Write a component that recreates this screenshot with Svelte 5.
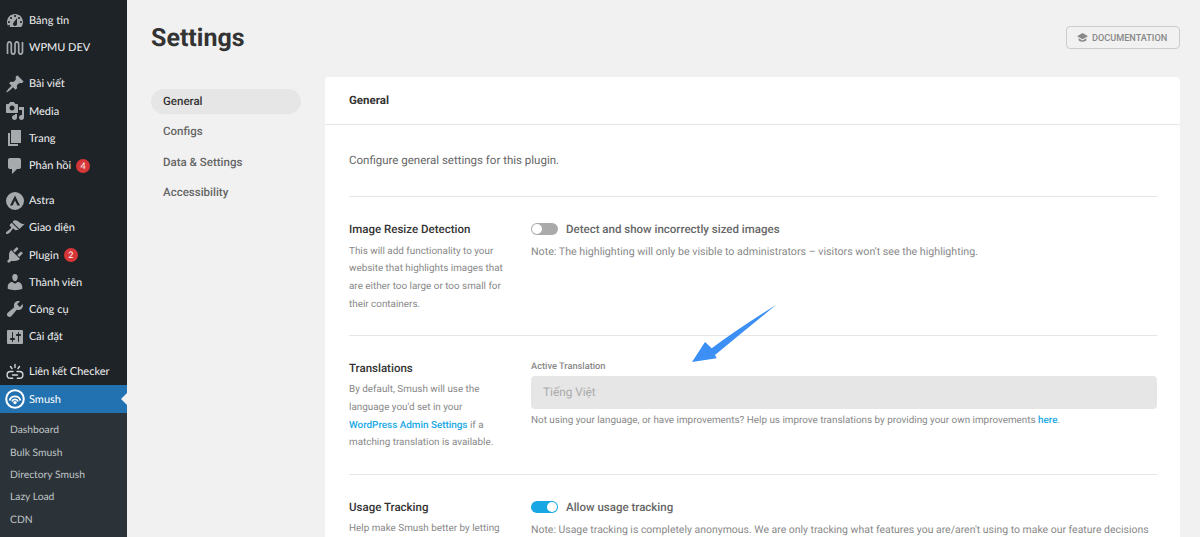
<script>
  const icons = {
    dashboard: "M3.76 16h12.48c1.1-1.37 1.76-3.11 1.76-5 0-4.42-3.58-8-8-8s-8 3.58-8 8c0 1.89.66 3.63 1.76 5zM10 4c.55 0 1 .45 1 1s-.45 1-1 1-1-.45-1-1 .45-1 1-1zM6 6c.55 0 1 .45 1 1s-.45 1-1 1-1-.45-1-1 .45-1 1-1zm8 0c.55 0 1 .45 1 1s-.45 1-1 1-1-.45-1-1 .45-1 1-1zm-5.37 5.55L12 7v6c0 1.1-.9 2-2 2s-2-.9-2-2c0-.57.24-1.08.63-1.45zM4 10c.55 0 1 .45 1 1s-.45 1-1 1-1-.45-1-1 .45-1 1-1zm12 0c.55 0 1 .45 1 1s-.45 1-1 1-1-.45-1-1 .45-1 1-1zm-12 4c.55 0 1 .45 1 1s-.45 1-1 1-1-.45-1-1 .45-1 1-1z",
    pin: "M10.44 3.02l1.82-1.82 6.36 6.35-1.83 1.82c-1.05-.68-2.48-.57-3.41.36l-.75.75c-.92.93-1.04 2.35-.35 3.41l-1.83 1.82-2.41-2.41-2.8 2.79c-.42.42-3.38 2.71-3.8 2.29s1.86-3.39 2.28-3.81l2.79-2.79L4.1 9.36l1.83-1.82c1.05.69 2.48.57 3.4-.36l.75-.75c.93-.92 1.05-2.35.36-3.41z",
    media: "M13 11V4c0-.55-.45-1-1-1h-1.67L9 1H5L3.67 3H2c-.55 0-1 .45-1 1v7c0 .55.45 1 1 1h10c.55 0 1-.45 1-1zM7 4.5c1.38 0 2.5 1.12 2.5 2.5S8.38 9.5 7 9.5 4.5 8.38 4.5 7 5.62 4.5 7 4.5zM14 6h5v10.5c0 1.38-1.12 2.5-2.5 2.5S14 17.88 14 16.5s1.12-2.5 2.5-2.5c.17 0 .34.02.5.05V9h-3V6zm-4 8.05V13h2v3.5c0 1.38-1.12 2.5-2.5 2.5S7 17.88 7 16.5 8.12 14 9.5 14c.17 0 .34.02.5.05z",
    page: "M6 15V2h10v13H6zm-1 1h8v2H3V5h2v11z",
    comments: "M5 2h9c1.1 0 2 .9 2 2v7c0 1.1-.9 2-2 2h-2l-5 5v-5H5c-1.1 0-2-.9-2-2V4c0-1.1.9-2 2-2z",
    appearance: "M14.48 11.06L7.41 3.99l1.5-1.5c.5-.56 2.3-.47 3.51.32 1.21.8 1.43 1.28 2.91 2.1 1.18.64 2.45 1.26 4.45.85zm-.71.71L6.7 4.7 4.93 6.47c-.39.39-.39 1.02 0 1.41l1.06 1.06c.39.39.39 1.03 0 1.42-.6.6-1.43 1.11-2.21 1.69-.35.26-.7.53-1.01.84C1.43 13.23.4 14.98 1.21 15.79c.8.8 2.55-.23 3.91-1.59.31-.31.58-.66.84-1.01.58-.78 1.09-1.61 1.69-2.21.39-.39 1.02-.39 1.41 0l1.06 1.06c.39.39 1.02.39 1.41 0z",
    plugin: "M13.11 4.36L9.87 7.6 8 5.73l3.24-3.24c.35-.34 1.05-.2 1.56.32.52.51.66 1.21.31 1.55zm-8 1.77l.91-1.12 9.01 9.01-1.19.84c-.71.71-2.63 1.16-3.82 1.16H6.14L4.9 17.26c-.59.59-1.54.59-2.12 0-.59-.58-.59-1.53 0-2.12l1.24-1.24v-3.88c0-1.13.4-3.19 1.09-3.89zm7.26 3.97l3.24-3.24c.34-.35 1.04-.21 1.55.31.52.51.66 1.21.31 1.55l-3.24 3.25z",
    users: "M10 9.25c-2.27 0-2.73-3.44-2.73-3.44C7 4.02 7.82 2 9.97 2c2.16 0 2.98 2.02 2.71 3.81 0 0-.41 3.44-2.68 3.44zm0 2.57L12.72 10c2.39 0 4.52 2.33 4.52 4.53v2.49s-3.65 1.13-7.24 1.13c-3.65 0-7.24-1.13-7.24-1.13v-2.49c0-2.25 1.94-4.48 4.47-4.48z",
    tools: "M16.68 9.77c-1.34 1.34-3.3 1.67-4.95.99l-5.41 6.52c-.99.99-2.59.99-3.58 0s-.99-2.59 0-3.57l6.52-5.42c-.68-1.65-.35-3.61.99-4.95 1.28-1.28 3.12-1.62 4.72-1.06l-2.89 2.89 2.82 2.82 2.86-2.87c.53 1.58.18 3.39-1.08 4.65z",
    settings: "M18 16V4c0-.55-.45-1-1-1H3c-.55 0-1 .45-1 1v12c0 .55.45 1 1 1h14c.55 0 1-.45 1-1zM8 11h1c.55 0 1 .45 1 1s-.45 1-1 1H8v1.5c0 .28-.22.5-.5.5s-.5-.22-.5-.5V13H6c-.55 0-1-.45-1-1s.45-1 1-1h1V5.5c0-.28.22-.5.5-.5s.5.22.5.5V11zm5-2h-1c-.55 0-1-.45-1-1s.45-1 1-1h1V5.5c0-.28.22-.5.5-.5s.5.22.5.5V7h1c.55 0 1 .45 1 1s-.45 1-1 1h-1v5.5c0 .28-.22.5-.5.5s-.5-.22-.5-.5V9z",
    astra: "M10 1a9 9 0 1 0 0 18 9 9 0 0 0 0-18zm-5 13.5L10 4.6l5 9.9h-2.6L10 9.4l-2.4 5.1z"
  };

  const groups = [
    [
      { label: "Bảng tin", icon: "dashboard" },
      { label: "WPMU DEV", icon: "wpmu" }
    ],
    [
      { label: "Bài viết", icon: "pin" },
      { label: "Media", icon: "media" },
      { label: "Trang", icon: "page" },
      { label: "Phản hồi", icon: "comments", badge: 4 }
    ],
    [
      { label: "Astra", icon: "astra" },
      { label: "Giao diện", icon: "appearance" },
      { label: "Plugin", icon: "plugin", badge: 2 },
      { label: "Thành viên", icon: "users" },
      { label: "Công cụ", icon: "tools" },
      { label: "Cài đặt", icon: "settings" }
    ]
  ];

  const submenu = ["Dashboard", "Bulk Smush", "Directory Smush", "Lazy Load", "CDN"];
  const tabs = ["General", "Configs", "Data & Settings", "Accessibility"];
</script>

<div class="page">
  <aside class="sidebar">
    {#each groups as group}
      <ul class="group">
        {#each group as item}
          <li class="item">
            <span class="icon">
              {#if item.icon === "wpmu"}
                <svg viewBox="0 0 20 20" width="20" height="20" fill="none" stroke="#a7aaad" stroke-width="1.7">
                  <path d="M2.5 16V6.5c0-3.6 3.8-3.6 3.8 0v7c0 3.4 3.7 3.4 3.7 0v-7c0-3.6 3.7-3.6 3.7 0v7c0 3.4 3.8 3.4 3.8 0V4" />
                </svg>
              {:else}
                <svg viewBox="0 0 20 20" width="20" height="20" fill="#a7aaad"><path fill-rule="evenodd" d={icons[item.icon]} /></svg>
              {/if}
            </span>
            <span>{item.label}</span>
            {#if item.badge}<span class="badge">{item.badge}</span>{/if}
          </li>
        {/each}
      </ul>
    {/each}

    <ul class="group last">
      <li class="item">
        <span class="icon">
          <svg viewBox="0 0 20 20" width="20" height="20" fill="none" stroke="#d5d7d9" stroke-width="1.4" stroke-linecap="round">
            <path d="M8 9.5H5.5a3.4 3.4 0 0 0 0 6.8h2.2M12 9.5h2.5a3.4 3.4 0 0 1 0 6.8h-2.2M7.5 13h5M5.5 4.5l1.5 2M10 2.5v3M14.5 4.5l-1.5 2" />
          </svg>
        </span>
        <span>Liên kết Checker</span>
      </li>
      <li class="item current">
        <span class="icon">
          <svg viewBox="0 0 20 20" width="20" height="20" fill="none" stroke="#fff">
            <circle cx="10" cy="10" r="8.8" stroke-width="2" />
            <path d="M4.6 11.5a5.6 5.6 0 0 1 10.8 0M7 12.5a3.2 3.2 0 0 1 6 0" stroke-width="1.9" />
            <circle cx="10" cy="13.6" r="1.7" fill="#fff" stroke="none" />
          </svg>
        </span>
        <span>Smush</span>
      </li>
    </ul>
    <ul class="submenu">
      {#each submenu as name}
        <li>{name}</li>
      {/each}
    </ul>
  </aside>

  <main class="main">
    <header class="top">
      <h1>Settings</h1>
      <button class="doc">
        <svg viewBox="0 0 20 20" width="11" height="11" fill="#888">
          <path d="M10 2 0 7.5l10 5.5 10-5.5zM3 11.5v3c0 1.5 3.2 3 7 3s7-1.5 7-3v-3l-7 3.8z" />
        </svg>
        DOCUMENTATION
      </button>
    </header>

    <div class="columns">
      <nav class="tabs">
        {#each tabs as tab, i}
          <div class="tab" class:active={i === 0}>{tab}</div>
        {/each}
      </nav>

      <section class="card">
        <h2 class="card-head">General</h2>
        <div class="card-body">
          <p class="intro">Configure general settings for this plugin.</p>

          <div class="row">
            <div class="side">
              <h3>Image Resize Detection</h3>
              <p>This will add functionality to your website that highlights images that are either too large or too small for their containers.</p>
            </div>
            <div class="field">
              <div class="toggle-line">
                <span class="toggle"><span class="knob"></span></span>
                <span>Detect and show incorrectly sized images</span>
              </div>
              <p class="note">Note: The highlighting will only be visible to administrators – visitors won't see the highlighting.</p>
            </div>
          </div>

          <div class="row">
            <div class="side">
              <h3>Translations</h3>
              <p>By default, Smush will use the language you'd set in your <a href="#top">WordPress Admin Settings</a> if a matching translation is available.</p>
            </div>
            <div class="field">
              <div class="field-label">Active Translation</div>
              <div class="select">Tiếng Việt</div>
              <p class="note tight">Not using your language, or have improvements? Help us improve translations by providing your own improvements <a href="#top">here</a>.</p>
            </div>
          </div>

          <div class="row">
            <div class="side">
              <h3>Usage Tracking</h3>
              <p>Help make Smush better by letting our designers learn how you're using the plugin.</p>
            </div>
            <div class="field">
              <div class="toggle-line">
                <span class="toggle on"><span class="knob"></span></span>
                <span>Allow usage tracking</span>
              </div>
              <p class="note usage">Note: Usage tracking is completely anonymous. We are only tracking what features you are/aren't using to make our feature decisions more informed.</p>
            </div>
          </div>
        </div>
      </section>
    </div>
  </main>

  <svg class="arrow" viewBox="0 0 100 70" width="100" height="70">
    <path d="M92 1 Q55 24 27.7 44.3 L21 38 L8 58 L32.7 54.3 L31 51 Q60 27 92 1 Z" fill="#3b8ff5" />
  </svg>
</div>

<style>
  :global(body) {
    background: #f1f1f1;
  }

  ul {
    list-style: none;
    margin: 0;
    padding: 0;
  }

  .page {
    display: flex;
    position: relative;
    height: 537px;
    overflow: hidden;
    font-family: Roboto, sans-serif;
    text-rendering: geometricPrecision;
  }

  .sidebar {
    flex: 0 0 127px;
    background: #1d2327;
    padding-top: 7px;
    font-family: Lato, sans-serif;
    font-size: 11px;
    color: #f0f0f1;
  }

  .group {
    margin-bottom: 8px;
  }

  .group:first-child {
    margin-bottom: 9px;
  }

  .group.last {
    margin-bottom: 0;
  }

  .item {
    display: flex;
    align-items: center;
    height: 27.2px;
  }

  .icon {
    flex: 0 0 29px;
    display: flex;
    justify-content: center;
  }

  .badge {
    width: 14px;
    height: 14px;
    margin-left: 5px;
    border-radius: 50%;
    background: #d63638;
    color: #fff;
    font-size: 9px;
    line-height: 14px;
    text-align: center;
  }

  .current {
    position: relative;
    background: #2271b1;
    color: #fff;
  }

  .current::after {
    content: "";
    position: absolute;
    right: 0;
    top: 8px;
    border: 6px solid transparent;
    border-right-color: #f1f1f1;
    border-left-width: 0;
  }

  .submenu {
    background: #2c3338;
    padding: 6.5px 0 40px;
  }

  .submenu li {
    padding-left: 10px;
    height: 22.4px;
    line-height: 22.4px;
    font-size: 10.3px;
    color: #bfc3c6;
  }

  .main {
    flex: 1;
    padding: 0 20px 0 24px;
    min-width: 0;
  }

  .top {
    display: flex;
    justify-content: space-between;
    align-items: flex-start;
    height: 77px;
  }

  h1 {
    margin: 24px 0 0;
    font-size: 25px;
    line-height: 30px;
    font-weight: 700;
    color: #333;
  }

  .doc {
    display: flex;
    align-items: center;
    gap: 4px;
    margin-top: 26px;
    height: 23px;
    width: 114px;
    padding: 0 0 0 10px;
    border: 1px solid #ccc;
    border-radius: 4px;
    background: transparent;
    font-family: Roboto, sans-serif;
    font-size: 9.15px;
    font-weight: 500;
    color: #888;
  }

  .columns {
    display: flex;
    gap: 24px;
    align-items: flex-start;
  }

  .tabs {
    flex: 0 0 150px;
    padding-top: 12px;
  }

  .tab {
    height: 25px;
    margin-bottom: 5.3px;
    padding-left: 12px;
    border-radius: 13px;
    font-size: 11.5px;
    font-weight: 500;
    line-height: 25px;
    color: #666;
  }

  .tab.active {
    background: #e6e6e6;
    color: #333;
  }

  .card {
    flex: 1;
    min-width: 0;
    background: #fff;
    border-radius: 4px;
    box-shadow: 0 2px 0 #e6e6e6;
  }

  .card-head {
    margin: 0;
    padding: 0 24px;
    height: 47px;
    border-bottom: 1px solid #e6e6e6;
    font-size: 11.5px;
    font-weight: 700;
    line-height: 47px;
    color: #333;
  }

  .card-body {
    padding: 0 23px 30px 24px;
  }

  .intro {
    margin: 0;
    padding: 27px 0 27px;
    font-size: 11.5px;
    line-height: 17px;
    color: #666;
  }

  .row {
    display: flex;
    border-top: 1px solid #e6e6e6;
    padding: 24px 0 21.5px;
  }

  .side {
    flex: 0 0 182px;
    padding-right: 26px;
    box-sizing: border-box;
  }

  h3 {
    margin: 0 0 4.5px;
    font-size: 11.5px;
    font-weight: 500;
    line-height: 17px;
    color: #333;
  }

  .side p {
    margin: 0;
    font-size: 9.9px;
    line-height: 17.7px;
    color: #888;
  }

  a {
    color: #17a8e3;
    font-weight: 500;
    text-decoration: none;
  }

  .field {
    flex: 1;
    min-width: 0;
  }

  .toggle-line {
    display: flex;
    align-items: center;
    gap: 8px;
    height: 16px;
    font-size: 11.5px;
    font-weight: 500;
    color: #666;
  }

  .toggle {
    display: flex;
    align-items: center;
    width: 27px;
    height: 12px;
    border-radius: 6px;
    background: #aaa;
    padding: 0 1px;
    box-sizing: border-box;
  }

  .toggle.on {
    justify-content: flex-end;
    background: #17a8e3;
  }

  .knob {
    width: 10px;
    height: 10px;
    border-radius: 50%;
    background: #fff;
  }

  .note {
    margin: 6px 0 0;
    font-size: 10.67px;
    line-height: 18px;
    color: #888;
  }

  .note.tight {
    margin-top: 3px;
    font-size: 9.9px;
  }

  .note.usage {
    font-size: 10.46px;
  }

  .field-label {
    font-size: 9.25px;
    font-weight: 500;
    line-height: 14px;
    color: #888;
  }

  .select {
    height: 33px;
    margin-top: 2px;
    padding-left: 12px;
    border-radius: 4px;
    background: #e6e6e6;
    font-size: 11.8px;
    line-height: 33px;
    color: #aaa;
  }

  .arrow {
    position: absolute;
    left: 684px;
    top: 304px;
  }
</style>
